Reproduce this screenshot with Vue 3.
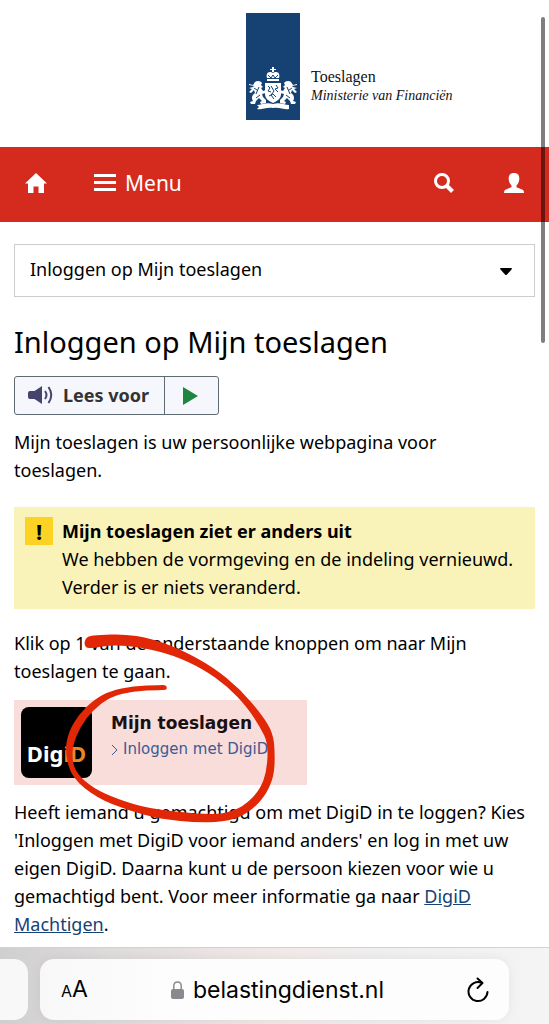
<template>
  <div class="screen">
    <header class="site-header">
      <a class="brand" href="#" aria-label="Toeslagen, Ministerie van Financiën">
        <svg class="ribbon" viewBox="0 0 54 107" aria-hidden="true">
          <rect width="54" height="107" fill="#154273" />
          <g fill="#fff">
            <path d="M26 54h2v2h2v1h-2v2h-2v-2h-2v-1h2z" />
            <path d="M21 65c-1-3 0-6 3-6 1 0 2 0 3 1 1-1 2-1 3-1 3 0 4 3 3 6z" />
            <path d="M21 66h12v2H21z" />
            <path d="M19 70h16v11c0 5-4 7-8 9-4-2-8-4-8-9z" />
            <path
              v-for="side in lionSides"
              :key="side.id"
              :transform="side.transform"
              d="M3 71l4 1 2-3c2-2 6-1 7 1l-1 2 2 2-2 1 2 3 3-1v3l-4 1 1 3 3 3v3l-5 1-1-2 2-1-3-3-3 3-1 3H5l-1-2 3-1c-2-3-1-6 2-8l-1-3-3 3-2-1 3-3-3-1 4-1 1-1-5-1z"
            />
            <path d="M11 92c5 0 9-3 16-1 7-2 11 1 16 1v4c-5 1-9-2-16-1-7-1-11 2-16 1l2-2z" />
          </g>
          <g fill="none" stroke="#154273" stroke-width="1">
            <path d="M22 62l3 3 2-3 2 3 3-3" />
            <path d="M22 73l2 2-2 3 3 1M30 72l2 3-3 1 3 3M25 73l3 5-3 4 3 4M23 83l4-2 3 3" />
            <path d="M8 75l3 2M13 74l-3 7M46 75l-3 2M41 74l3 7M10 85l4-3M44 85l-4-3" />
          </g>
        </svg>
        <span class="brand-text">
          <span>Toeslagen</span>
          <em>Ministerie van Financiën</em>
        </span>
      </a>
    </header>

    <nav class="navbar">
      <a href="#" class="nav-link" aria-label="Home">
        <svg width="22" height="22" viewBox="0 0 22 22" fill="#fff" aria-hidden="true">
          <path d="M11 1L0 11.5h3V21h5.500v-6.500h5V21H19v-9.500h3z" />
        </svg>
      </a>
      <button type="button" class="menu-button">
        <svg width="22" height="18" viewBox="0 0 22 18" fill="#fff" aria-hidden="true">
          <path d="M0 0h22v3H0zM0 7h22v3H0zM0 14h22v3H0z" />
        </svg>
        Menu
      </button>
      <button type="button" class="nav-link search" aria-label="Zoeken">
        <svg width="20" height="20" viewBox="0 0 20 20" fill="none" stroke="#fff" aria-hidden="true">
          <circle cx="8" cy="8" r="6.500" stroke-width="3" />
          <path d="M12.500 12.500l6 6" stroke-width="4" />
        </svg>
      </button>
      <a href="#" class="nav-link" aria-label="Inloggen">
        <svg width="20" height="20" viewBox="0 0 20 20" fill="#fff" aria-hidden="true">
          <path d="M10 0c4 0 5.500 2.500 5.300 6-.1 3-1.300 5-2.800 6.500v1.700l5 2c1.800.7 2.500 1.500 2.500 3.800H0c0-2.300.7-3.100 2.500-3.800l5-2v-1.700C6 11 4.800 9 4.700 6 4.500 2.500 6 0 10 0z" />
        </svg>
      </a>
    </nav>

    <main class="content">
      <div class="page-select">
        <select v-model="page" aria-label="Pagina">
          <option>Inloggen op Mijn toeslagen</option>
        </select>
        <svg class="caret" width="12" height="8" viewBox="0 0 12 8" aria-hidden="true">
          <path d="M1 0h10q1.500 0 .5 1.500L7 6.500q-1 1-2 0L.5 1.500Q-.5 0 1 0z" />
        </svg>
      </div>

      <h1>Inloggen op Mijn toeslagen</h1>

      <div class="reader">
        <button type="button" class="read-button">
          <svg width="26" height="20" viewBox="0 0 26 20" aria-hidden="true">
            <path d="M2 6h4.500L14 1v18l-7.500-5H2q-2 0-2-2V8q0-2 2-2z" fill="#46446b" />
            <path d="M17 6q3 4 0 8M20.500 2q5.500 8 0 16" fill="none" stroke="#46446b" stroke-width="2" />
          </svg>
          Lees voor
        </button>
        <button type="button" class="play-button" aria-label="Afspelen">
          <svg width="15" height="18" viewBox="0 0 15 18" aria-hidden="true">
            <path d="M0 0l15 9-15 9z" fill="#1e8540" />
          </svg>
        </button>
      </div>

      <p>Mijn toeslagen is uw persoonlijke webpagina voor<br>toeslagen.</p>

      <section class="notice">
        <span class="notice-icon" aria-hidden="true">!</span>
        <div>
          <strong>Mijn toeslagen ziet er anders uit</strong><br>
          We hebben de vormgeving en de indeling vernieuwd. Verder is er niets veranderd.
        </div>
      </section>

      <p class="instruction">Klik op 1 van de onderstaande knoppen om naar Mijn toeslagen te gaan.</p>

      <div class="login-card">
        <div class="digid">Dig<span>iD</span></div>
        <div class="login-text">
          <strong>Mijn toeslagen</strong>
          <a href="#">
            <svg width="8" height="12" viewBox="0 0 8 12" aria-hidden="true">
              <path d="M1 1l5 5-5 5" fill="none" stroke="currentColor" />
            </svg>
            Inloggen met DigiD
          </a>
        </div>
        <svg class="marker" width="212" height="190" viewBox="64 634 212 190" aria-hidden="true">
          <path :d="markerPath" fill="#e22707" />
        </svg>
      </div>

      <p class="closing">
        Heeft iemand u gemachtigd om met DigiD in te loggen? Kies 'Inloggen met DigiD voor iemand anders' en log in met uw eigen DigiD. Daarna kunt u de persoon kiezen voor wie u gemachtigd bent. Voor meer informatie ga naar <a href="#">DigiD Machtigen</a>.
      </p>
    </main>

    <footer class="browser-bar">
      <div class="previous-tab"></div>
      <div class="address">
        <button type="button" class="text-size" aria-label="Tekstgrootte"><small>A</small>A</button>
        <span class="domain">
          <svg width="13" height="18" viewBox="0 0 13 18" aria-hidden="true">
            <path d="M2.800 9V5q0-4 3.700-4t3.700 4v4" fill="none" stroke="#8a898e" stroke-width="1.500" />
            <rect y="8" width="13" height="10" rx="2" fill="#8a898e" />
          </svg>
          belastingdienst.nl
        </span>
        <button type="button" class="reload" aria-label="Vernieuwen">
          <svg width="22" height="26" viewBox="0 0 22 26" fill="none" stroke="#000" stroke-width="2" stroke-linecap="round" stroke-linejoin="round" aria-hidden="true">
            <path d="M14.500 5.700A9.500 9.500 0 1 0 20.500 15" />
            <path d="M10.500 1.500l5 4.500-5 5" />
          </svg>
        </button>
      </div>
    </footer>

    <div class="scroll-thumb"></div>
  </div>
</template>

<script setup>
import { ref } from 'vue'

const page = ref('Inloggen op Mijn toeslagen')

// the right lion mirrors the left one
const lionSides = [
  { id: 'left', transform: 'translate(0 0)' },
  { id: 'right', transform: 'translate(54 0) scale(-1 1)' }
]

// outline of the pen stroke: outer edge first, then back along the inner edge
const outline = [
  [84, 643], [87, 636], [100, 635], [123, 634], [150, 638], [180, 649], [213, 667],
  [240, 689], [262, 715], [273, 733], [275, 753], [274, 777], [264, 798],
  [248, 813], [230, 821], [200, 823], [160, 819], [127, 810], [97, 798],
  [72, 778], [65, 753], [68, 733], [79, 714], [95, 699], [110, 691], [133, 686],
  [160, 685], [166, 685], [167, 688], [166, 690], [160, 690], [133, 691], [110, 697],
  [93, 710], [80, 727], [73, 745], [72, 760], [77, 774], [93, 788], [117, 799],
  [150, 809], [200, 814], [223, 814], [243, 807], [260, 790], [267, 770], [268, 743],
  [260, 727], [247, 707], [227, 686], [203, 669], [173, 655], [140, 647],
  [113, 645], [92, 648], [86, 648]
]

const smoothPath = (points) => {
  const mid = (a, b) => `${(a[0] + b[0]) / 2} ${(a[1] + b[1]) / 2}`
  const last = points[points.length - 1]
  const curves = points.map((point, i) => {
    const next = points[(i + 1) % points.length]
    return `Q${point[0]} ${point[1]} ${mid(point, next)}`
  })
  return `M${mid(last, points[0])}${curves.join('')}Z`
}

const markerPath = smoothPath(outline)
</script>

<style>
body {
  margin: 0;
  background: #fff;
}
</style>

<style scoped>
.screen {
  position: relative;
  display: flex;
  flex-direction: column;
  min-height: 100vh;
  font-family: "Noto Sans", sans-serif;
  font-size: 18px;
  line-height: 28px;
  color: #000;
}

button {
  font: inherit;
  color: inherit;
  border: none;
  padding: 0;
  background: none;
  cursor: pointer;
}

svg {
  display: block;
  flex: none;
}

.site-header {
  padding: 13px 3px 27px 0;
}

.brand {
  display: grid;
  grid-template-columns: 1fr 54px 1fr;
  color: #111;
  text-decoration: none;
}

.ribbon {
  grid-column: 2;
  width: 54px;
}

.brand-text {
  display: flex;
  flex-direction: column;
  padding: 54px 0 0 11px;
  font-family: "Liberation Serif", serif;
  font-size: 16px;
  line-height: 19px;
  white-space: nowrap;
}

.brand-text em {
  font-size: 14px;
}

.navbar {
  display: flex;
  align-items: center;
  height: 75px;
  box-sizing: border-box;
  padding: 0 25px 3px;
  background: #d52b1e;
  color: #fff;
}

.menu-button {
  display: flex;
  align-items: center;
  gap: 9px;
  margin-left: 47px;
  font-size: 21px;
}

.search {
  margin: 0 50px 0 auto;
}

.content {
  flex: 1;
  padding: 22px 14px 0;
}

.content p {
  margin: 13px 0;
}

.page-select {
  position: relative;
}

.page-select select {
  display: block;
  width: 100%;
  height: 53px;
  padding: 0 40px 3px 15px;
  border: 1px solid #ccc;
  border-radius: 0;
  background: #fff;
  color: #000;
  font: inherit;
  appearance: none;
}

.caret {
  position: absolute;
  top: 24px;
  right: 23px;
  pointer-events: none;
}

h1 {
  margin: 27px 0 16px;
  font-size: 29px;
  line-height: 36px;
  font-weight: 400;
}

.reader {
  display: inline-flex;
  height: 39px;
  box-sizing: border-box;
  border: 1px solid #5f6b72;
  border-radius: 3px;
  background: #f5f7fc;
  vertical-align: top;
}

.read-button {
  display: flex;
  align-items: center;
  gap: 9px;
  padding: 0 15px 2px 13px;
  color: #333;
  font-weight: 700;
}

.play-button {
  padding: 0 20px 0 18px;
  border-left: 1px solid #5f6b72;
}

.content .notice {
  display: flex;
  gap: 9px;
  margin: 23px 0 20px;
  padding: 10px 11px 8px;
  background: #faf3b9;
}

.notice-icon {
  flex: none;
  width: 28px;
  height: 28px;
  background: #fcd324;
  font-size: 22px;
  font-weight: 700;
  text-align: center;
}

.content .instruction {
  margin: 20px 0 15px;
}

.content .closing {
  margin-bottom: 9px;
}

.login-card {
  position: relative;
  display: flex;
  gap: 19px;
  width: 293px;
  height: 85px;
  box-sizing: border-box;
  padding: 7px;
  background: #f8dddb;
}

.digid {
  display: flex;
  align-items: center;
  justify-content: center;
  flex: none;
  width: 71px;
  height: 71px;
  box-sizing: border-box;
  padding-top: 20px;
  border-radius: 8px;
  background: #000;
  color: #fff;
  font-size: 22px;
  font-weight: 700;
}

.digid span {
  color: #e6882a;
}

.login-text {
  padding-top: 4px;
  font-family: "DejaVu Sans", sans-serif;
  font-size: 15px;
  line-height: 25px;
  white-space: nowrap;
}

.login-text strong {
  font-size: 17px;
  color: #1a1012;
}

.login-text a {
  display: flex;
  align-items: center;
  gap: 4px;
  color: #3d5a94;
  text-decoration: none;
}

.marker {
  position: absolute;
  top: -66px;
  left: 50px;
  pointer-events: none;
}

.content p a {
  color: #154273;
}

.browser-bar {
  display: flex;
  gap: 12px;
  padding: 11px 40px 4px 0;
  border-top: 1px solid #d3d2d3;
  background: linear-gradient(90deg, #d0cfd0 0, #dedbdb 20%, #f1e9e8 50%, #efefef 70%, #f4f4f4 100%);
  font-family: Inter, sans-serif;
}

.previous-tab {
  width: 28px;
  border-radius: 0 14px 14px 0;
  background: #f8f8f8;
}

.address {
  display: flex;
  align-items: center;
  justify-content: space-between;
  flex: 1;
  height: 61px;
  padding: 0 20px 0 21px;
  border-radius: 14px;
  background: linear-gradient(90deg, #f8f8f8, #fdfdfd 30%);
  box-shadow: 0 0 12px rgba(0, 0, 0, 0.06);
}

.text-size {
  font-size: 23px;
}

.text-size small {
  font-size: 16px;
}

.domain {
  display: flex;
  align-items: center;
  gap: 9px;
  font-size: 23px;
}

.scroll-thumb {
  position: absolute;
  top: 17px;
  right: 4px;
  width: 4px;
  height: 326px;
  border-radius: 2px;
  background: rgba(0, 0, 0, 0.5);
}
</style>
